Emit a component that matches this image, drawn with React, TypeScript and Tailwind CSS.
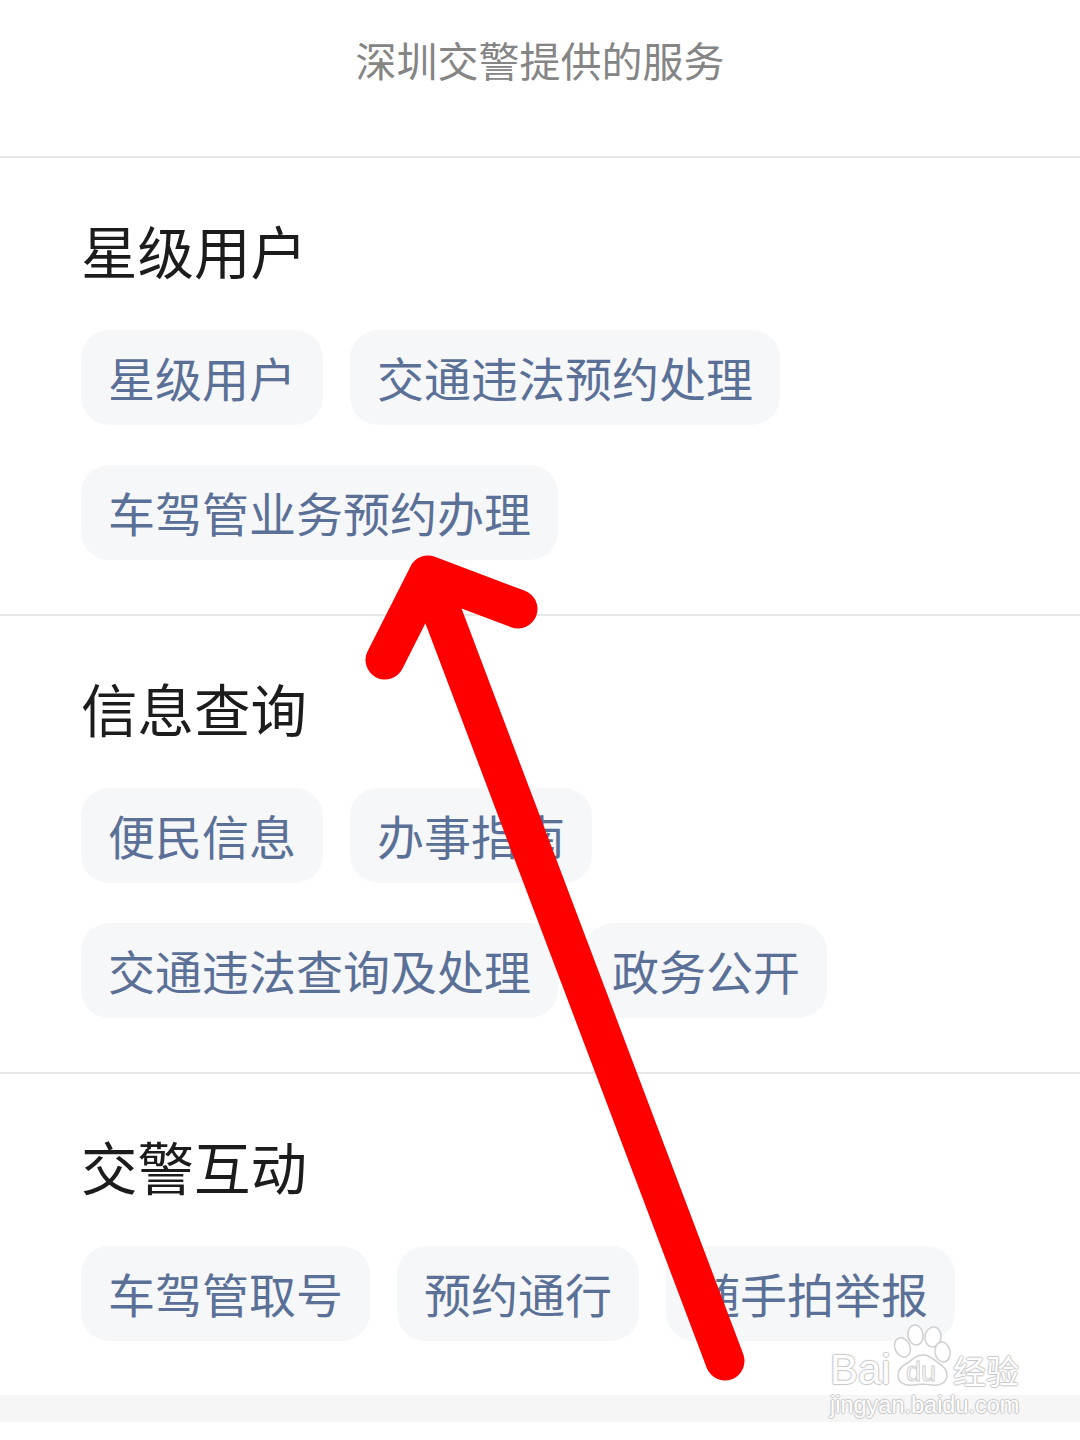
import React from 'react';

const sections = [
  { title: '星级用户', rows: [['星级用户', '交通违法预约处理'], ['车驾管业务预约办理']] },
  { title: '信息查询', rows: [['便民信息', '办事指南'], ['交通违法查询及处理', '政务公开']] },
  { title: '交警互动', rows: [['车驾管取号', '预约通行', '随手拍举报']] },
];

const outline = { textShadow: '1px 0 1px #c6c6c6, -1px 0 1px #c6c6c6, 0 1px 1px #c6c6c6, 0 -1px 1px #c6c6c6' };

const Watermark = () => (
  <div className="absolute left-[830px] top-[1324px] w-[192px] flex flex-col text-white font-['Liberation_Sans',sans-serif]">
    <div className="flex items-end">
      <span className="w-[63px] text-[42px] leading-[44px]" style={outline}>Bai</span>
      <svg width="60" height="68" viewBox="0 0 60 68" fill="#ffffff" stroke="#cfcfcf" strokeWidth="1.5">
        <ellipse cx="9.5" cy="23.5" rx="7.5" ry="10" transform="rotate(-25 9.5 23.5)" />
        <ellipse cx="22.5" cy="11" rx="7.5" ry="10" transform="rotate(-8 22.5 11)" />
        <ellipse cx="40" cy="13" rx="8" ry="10" transform="rotate(8 40 13)" />
        <ellipse cx="49.5" cy="28" rx="7.5" ry="10" transform="rotate(-12 49.5 28)" />
        <path d="M30 31c-7 0-10 4-14 7-6 3-11 7-11 13 0 8 7 11 15 10 6-1 14-1 20 0 8 1 14-3 14-10 0-6-5-10-10-13-4-3-7-7-14-7z" />
        <text x="13" y="57" fontSize="27" strokeWidth="1" fontFamily="Liberation Sans">du</text>
      </svg>
      <span className="text-[33px] leading-[44px] font-['Noto_Sans_CJK_SC',sans-serif]" style={outline}>经验</span>
    </div>
    <span className="text-[23.5px] leading-[26px] whitespace-nowrap" style={outline}>jingyan.baidu.com</span>
  </div>
);

export default function App() {
  return (
    <div className="relative w-[1080px] h-[1440px] overflow-hidden bg-white font-['Noto_Sans_CJK_SC',sans-serif]">
      <div className="h-[158px] border-b-2 border-[#e8e8e8] pt-[35px] text-center text-[41px] leading-[48px] text-[#858585]">
        深圳交警提供的服务
      </div>
      {sections.map((s, i) => (
        <div key={s.title} className={`px-[81px] pt-[59px] pb-[54px] ${i < 2 ? 'border-b-2 border-[#e8e8e8]' : ''}`}>
          <div className="text-[56.5px] leading-[64px] text-[#1c1c1c] mb-[49px]">{s.title}</div>
          <div className="flex flex-col gap-[40px]">
            {s.rows.map((row, j) => (
              <div key={j} className="flex gap-[27px]">
                {row.map(c => (
                  <div key={c} className="h-[95px] px-[27px] flex items-center rounded-[28px] bg-[#f6f7f9] text-[47px] text-[#5b7097] whitespace-nowrap">
                    {c}
                  </div>
                ))}
              </div>
            ))}
          </div>
        </div>
      ))}
      <div className="h-[27px] bg-[#f6f6f6]" />
      <svg className="absolute inset-0" width="1080" height="1440" viewBox="0 0 1080 1440" fill="none">
        <path d="M725 1361L428 575M385 660L428 575L518 609" stroke="#ff0000" strokeWidth="39" strokeLinecap="round" strokeLinejoin="round" />
      </svg>
      <Watermark />
    </div>
  );
}
